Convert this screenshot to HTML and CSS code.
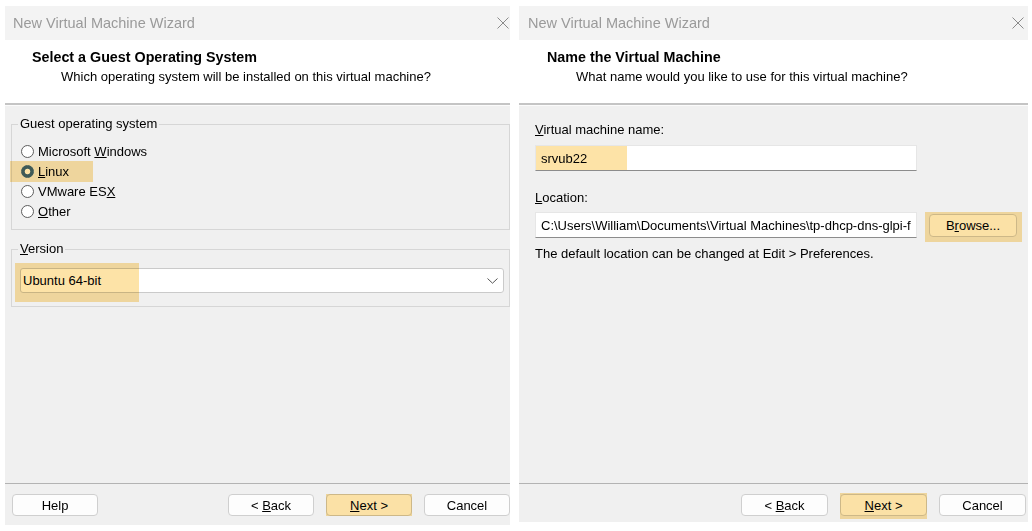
FILE: index.html
```html
<!DOCTYPE html>
<html>
<head>
<meta charset="utf-8">
<title>New Virtual Machine Wizard</title>
<link rel="stylesheet" href="styles.css">
</head>
<body>
<div class="desk">
  <section class="win win-left">
    <div class="titlebar">
      <span class="title">New Virtual Machine Wizard</span>
      <svg class="close" width="12" height="12" viewBox="0 0 12 12"><path d="M0.5 0.5L11.5 11.5M11.5 0.5L0.5 11.5" stroke="#8a8a8a" stroke-width="1" fill="none"/></svg>
    </div>
    <div class="header">
      <div class="h-title">Select a Guest Operating System</div>
      <div class="h-sub">Which operating system will be installed on this virtual machine?</div>
    </div>
    <div class="rule"></div>
    <div class="content">
      <fieldset class="group group-os">
        <legend>Guest operating system</legend>
        <div class="radio first"><span class="dot"></span><span>Microsoft <u>W</u>indows</span></div>
        <div class="radio mark mark-linux"><span class="dot on"></span><span><u>L</u>inux</span></div>
        <div class="radio"><span class="dot"></span><span>VMware ES<u>X</u></span></div>
        <div class="radio"><span class="dot"></span><span><u>O</u>ther</span></div>
      </fieldset>
      <fieldset class="group group-ver">
        <legend><u>V</u>ersion</legend>
        <div class="select mark mark-ver">
          <span>Ubuntu 64-bit</span>
          <svg width="11" height="6" viewBox="0 0 11 6"><path d="M0.5 0.5L5.5 5.2L10.5 0.5" stroke="#555" stroke-width="1" fill="none"/></svg>
        </div>
      </fieldset>
    </div>
    <div class="footer footer-left">
      <button class="btn btn-help">Help</button>
      <button class="btn">&lt; <u>B</u>ack</button>
      <button class="btn mark mark-next"><u>N</u>ext &gt;</button>
      <button class="btn">Cancel</button>
    </div>
  </section>

  <section class="win win-right">
    <div class="titlebar">
      <span class="title">New Virtual Machine Wizard</span>
      <svg class="close" width="12" height="12" viewBox="0 0 12 12"><path d="M0.5 0.5L11.5 11.5M11.5 0.5L0.5 11.5" stroke="#8a8a8a" stroke-width="1" fill="none"/></svg>
    </div>
    <div class="header">
      <div class="h-title">Name the Virtual Machine</div>
      <div class="h-sub">What name would you like to use for this virtual machine?</div>
    </div>
    <div class="rule"></div>
    <div class="content content-right">
      <div class="field-label"><u>V</u>irtual machine name:</div>
      <div class="input input-name mark mark-name">srvub22</div>
      <div class="field-label label-loc"><u>L</u>ocation:</div>
      <div class="loc-row">
        <div class="input input-loc">C:\Users\William\Documents\Virtual Machines\tp-dhcp-dns-glpi-f</div>
        <button class="btn btn-browse mark mark-browse">B<u>r</u>owse...</button>
      </div>
      <div class="note">The default location can be changed at Edit &gt; Preferences.</div>
    </div>
    <div class="footer footer-right">
      <button class="btn">&lt; <u>B</u>ack</button>
      <button class="btn mark mark-next2"><u>N</u>ext &gt;</button>
      <button class="btn">Cancel</button>
    </div>
  </section>
</div>
</body>
</html>
```

FILE: styles.css
```css
* { box-sizing: border-box; }
html, body { margin: 0; padding: 0; background: #fff; }
body {
  font-family: "Liberation Sans", Arial, sans-serif;
  font-size: 13px;
  color: #000;
}
.desk {
  display: flex;
  align-items: flex-start;
  gap: 9px;
  padding: 6px 0 0 5px;
}
.win {
  display: flex;
  flex-direction: column;
  background: #f0f0f0;
}
.win-left { width: 505px; height: 519px; }
.win-right { width: 509px; height: 516px; }

.titlebar {
  flex: none;
  height: 34px;
  background: #f3f3f3;
  display: flex;
  align-items: center;
  justify-content: space-between;
  padding: 0 1px 1px 8px;
  font-size: 14.5px;
  color: #9a9a9a;
}
.win-right .titlebar { padding: 0 4px 1px 9px; }
.close { display: block; }

.header {
  flex: none;
  height: 63px;
  background: #fff;
  padding: 9px 0 0 27px;
}
.win-right .header { padding-left: 28px; }
.h-title {
  font-weight: bold;
  font-size: 14.3px;
  line-height: 16px;
}
.h-sub {
  margin-top: 4px;
  padding-left: 29px;
  line-height: 16px;
}
.rule {
  flex: none;
  height: 3px;
  border-top: 2px solid #c4c4c4;
  border-bottom: 1px solid #fbfbfb;
}
.content { flex: 1; min-height: 0; }

.group {
  margin: 10px 0 0 6px;
  padding: 0 5px 8px 8px;
  border: 1px solid #d6d6d6;
  min-width: 0;
}
.group legend {
  padding: 0 2px;
  margin-left: -2px;
  line-height: 16px;
}
.radio {
  height: 20px;
  display: flex;
  align-items: center;
  gap: 4px;
  padding-left: 1px;
}
.radio.first { margin-top: 9px; }
.dot {
  width: 13px;
  height: 13px;
  border-radius: 50%;
  border: 1px solid #5e5e5e;
  background: #fff;
  flex: none;
}
.dot.on {
  border-color: #3f6584;
  background: radial-gradient(circle, #fff 0 2.4px, #3f6584 3.2px);
}
.group-ver { margin-top: 11px; padding-bottom: 13px; }
.select {
  margin-top: 11px;
  height: 25px;
  background: #fff;
  border: 1px solid #cacaca;
  border-radius: 3px;
  display: flex;
  align-items: center;
  justify-content: space-between;
  padding: 0 5px 0 2px;
}

.footer {
  flex: none;
  border-top: 1px solid #b3b3b3;
  display: flex;
  gap: 12px;
  padding-top: 10px;
}
.footer-left { padding-left: 7px; height: 42px; }
.footer-right { justify-content: flex-end; padding-right: 2px; height: 39px; }
.btn {
  width: 87px;
  height: 22px;
  padding: 0;
  border: 1px solid #cfcfcf;
  border-radius: 4px;
  background: #fdfdfd;
  font: inherit;
  color: #000;
}
.footer-left .btn { width: 86px; }
.btn-help { margin-right: auto; }
.btn-browse { width: 88px; height: 23px; }

.content-right { padding: 16px 0 0 16px; }
.field-label { line-height: 16px; }
.input {
  width: 382px;
  height: 26px;
  background: #fff;
  border: 1px solid #e6e6e6;
  border-bottom-color: #8c8c8c;
  padding-left: 5px;
  display: flex;
  align-items: center;
  white-space: nowrap;
  overflow: hidden;
}
.input-name { margin-top: 7px; }
.label-loc { margin-top: 19px; }
.loc-row {
  margin-top: 6px;
  display: flex;
  align-items: center;
  gap: 12px;
}
.note { margin-top: 8px; line-height: 16px; }

/* yellow annotation highlights */
.mark { position: relative; }
.mark::after {
  content: "";
  position: absolute;
  background: #fde3a7;
  mix-blend-mode: multiply;
  pointer-events: none;
}
.mark-linux::after { left: -10px; top: 0; width: 83px; height: 21px; }
.mark-ver::after { left: -6px; top: -6px; width: 124px; height: 39px; }
.mark-name::after { left: -4px; top: -2px; width: 95px; height: 28px; }
.mark-browse::after { left: -5px; top: -3px; width: 97px; height: 30px; }
.mark-next::after { left: -1px; top: -1px; right: -1px; bottom: -1px; }
.mark-next2::after { left: -1px; top: -2px; right: -1px; bottom: -4px; }
```
